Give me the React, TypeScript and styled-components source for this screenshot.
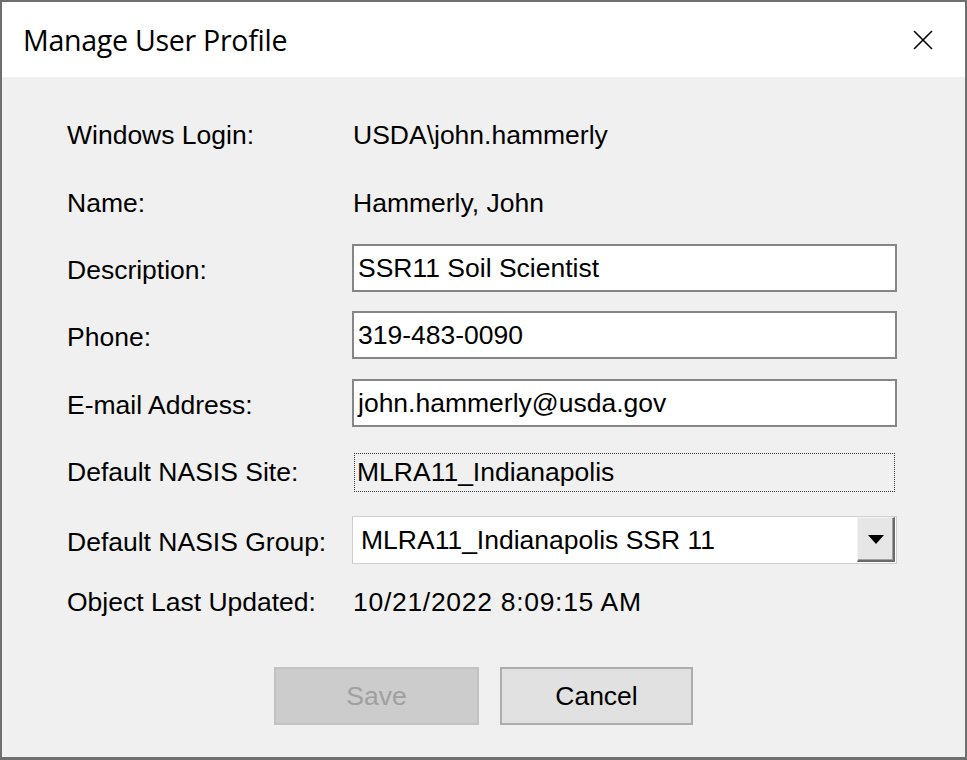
import React from "react";
import styled, { createGlobalStyle } from "styled-components";

const GlobalStyle = createGlobalStyle`
  html, body {
    margin: 0;
    padding: 0;
    background: #ffffff;
  }
  * { box-sizing: border-box; }
`;

const Window = styled.div`
  width: 967px;
  height: 760px;
  display: flex;
  flex-direction: column;
  border: 2px solid #6f6f6f;
  border-bottom-width: 3px;
  background: #f0f0f0;
  font-family: "Liberation Sans", Arial, sans-serif;
  color: #000;
`;

const TitleBar = styled.div`
  height: 75px;
  flex: 0 0 75px;
  background: #ffffff;
  display: flex;
  align-items: center;
  justify-content: space-between;
  padding: 0 32px 0 21px;
`;

const Title = styled.div`
  font-family: "Open Sans", "Noto Sans", sans-serif;
  font-size: 28.6px;
  letter-spacing: -0.3px;
  color: #000;
`;

const CloseIcon = styled.svg`
  width: 20px;
  height: 20px;
  display: block;
`;

const Body = styled.div`
  flex: 1;
  display: flex;
  flex-direction: column;
  padding: 34px 0 0 65px;
`;

const Row = styled.div<{ $mt: number; $h: number }>`
  display: flex;
  align-items: center;
  margin-top: ${(p) => p.$mt}px;
  height: ${(p) => p.$h}px;
`;

const Label = styled.div<{ $dy?: number }>`
  width: 285px;
  flex: 0 0 285px;
  font-size: 26.5px;
  padding-top: ${(p) => (p.$dy ?? 0) * 2}px;
  white-space: nowrap;
`;

const StaticValue = styled.div<{ $spacing?: number }>`
  font-size: 26.5px;
  padding-left: 1px;
  letter-spacing: ${(p) => p.$spacing ?? 0}px;
  white-space: nowrap;
`;

const TextBox = styled.div`
  width: 545px;
  height: 48px;
  background: #ffffff;
  border: 2px solid #868686;
  display: flex;
  align-items: center;
  padding-left: 4px;
  font-size: 26.5px;
  white-space: nowrap;
`;

const FocusBox = styled.div`
  width: 541px;
  height: 39px;
  margin-left: 2px;
  border: 1px dotted #3a3a3a;
  display: flex;
  align-items: center;
  padding-left: 2px;
  font-size: 26.5px;
  white-space: nowrap;
`;

const Combo = styled.div`
  width: 545px;
  height: 48px;
  background: #ffffff;
  border: 1px solid #cfcfcf;
  display: flex;
  align-items: stretch;
  font-size: 26.5px;
`;

const ComboText = styled.div`
  flex: 1;
  display: flex;
  align-items: center;
  padding-left: 8px;
  white-space: nowrap;
`;

const ComboButton = styled.div`
  width: 38px;
  margin: 0 1px 1px 0;
  background: #e6e6e6;
  border-top: 1px solid #f4f4f4;
  border-left: 1px solid #f4f4f4;
  border-right: 2px solid #6a6a6a;
  border-bottom: 2px solid #6a6a6a;
  box-shadow: inset -1px -1px 0 #a0a0a0;
  display: flex;
  align-items: center;
  justify-content: center;
`;

const Arrow = styled.div`
  width: 0;
  height: 0;
  border-left: 8px solid transparent;
  border-right: 8px solid transparent;
  border-top: 9px solid #000;
  margin-top: 1px;
`;

const ButtonBar = styled.div`
  display: flex;
  justify-content: center;
  gap: 21px;
  margin-top: 41px;
  margin-left: -65px;
`;

const Button = styled.div<{ $disabled?: boolean; $w: number }>`
  width: ${(p) => p.$w}px;
  height: 58px;
  display: flex;
  align-items: center;
  justify-content: center;
  font-size: 26.5px;
  background: ${(p) => (p.$disabled ? "#cccccc" : "#e1e1e1")};
  border: 2px solid ${(p) => (p.$disabled ? "#c2c2c2" : "#adadad")};
  color: ${(p) => (p.$disabled ? "#a0a0a0" : "#000")};
`;

export default function App() {
  return (
    <>
      <GlobalStyle />
      <Window>
        <TitleBar>
          <Title>Manage User Profile</Title>
          <CloseIcon viewBox="0 0 20 20">
            <path d="M1 1 L19 19 M19 1 L1 19" stroke="#000" strokeWidth="1.6" fill="none" />
          </CloseIcon>
        </TitleBar>
        <Body>
          <Row $mt={0} $h={48}>
            <Label>Windows Login:</Label>
            <StaticValue>USDA\john.hammerly</StaticValue>
          </Row>
          <Row $mt={20} $h={48}>
            <Label>Name:</Label>
            <StaticValue>Hammerly, John</StaticValue>
          </Row>
          <Row $mt={17} $h={48}>
            <Label $dy={2}>Description:</Label>
            <TextBox>SSR11 Soil Scientist</TextBox>
          </Row>
          <Row $mt={19} $h={48}>
            <Label $dy={2}>Phone:</Label>
            <TextBox>319-483-0090</TextBox>
          </Row>
          <Row $mt={20} $h={48}>
            <Label $dy={2}>E-mail Address:</Label>
            <TextBox>john.hammerly@usda.gov</TextBox>
          </Row>
          <Row $mt={26} $h={39}>
            <Label>Default NASIS Site:</Label>
            <FocusBox>MLRA11_Indianapolis</FocusBox>
          </Row>
          <Row $mt={24} $h={48}>
            <Label $dy={2}>Default NASIS Group:</Label>
            <Combo>
              <ComboText>MLRA11_Indianapolis SSR 11</ComboText>
              <ComboButton>
                <Arrow />
              </ComboButton>
            </Combo>
          </Row>
          <Row $mt={14} $h={48}>
            <Label>Object Last Updated:</Label>
            <StaticValue $spacing={0.7}>10/21/2022 8:09:15 AM</StaticValue>
          </Row>
          <ButtonBar>
            <Button $disabled $w={205}>Save</Button>
            <Button $w={193}>Cancel</Button>
          </ButtonBar>
        </Body>
      </Window>
    </>
  );
}
